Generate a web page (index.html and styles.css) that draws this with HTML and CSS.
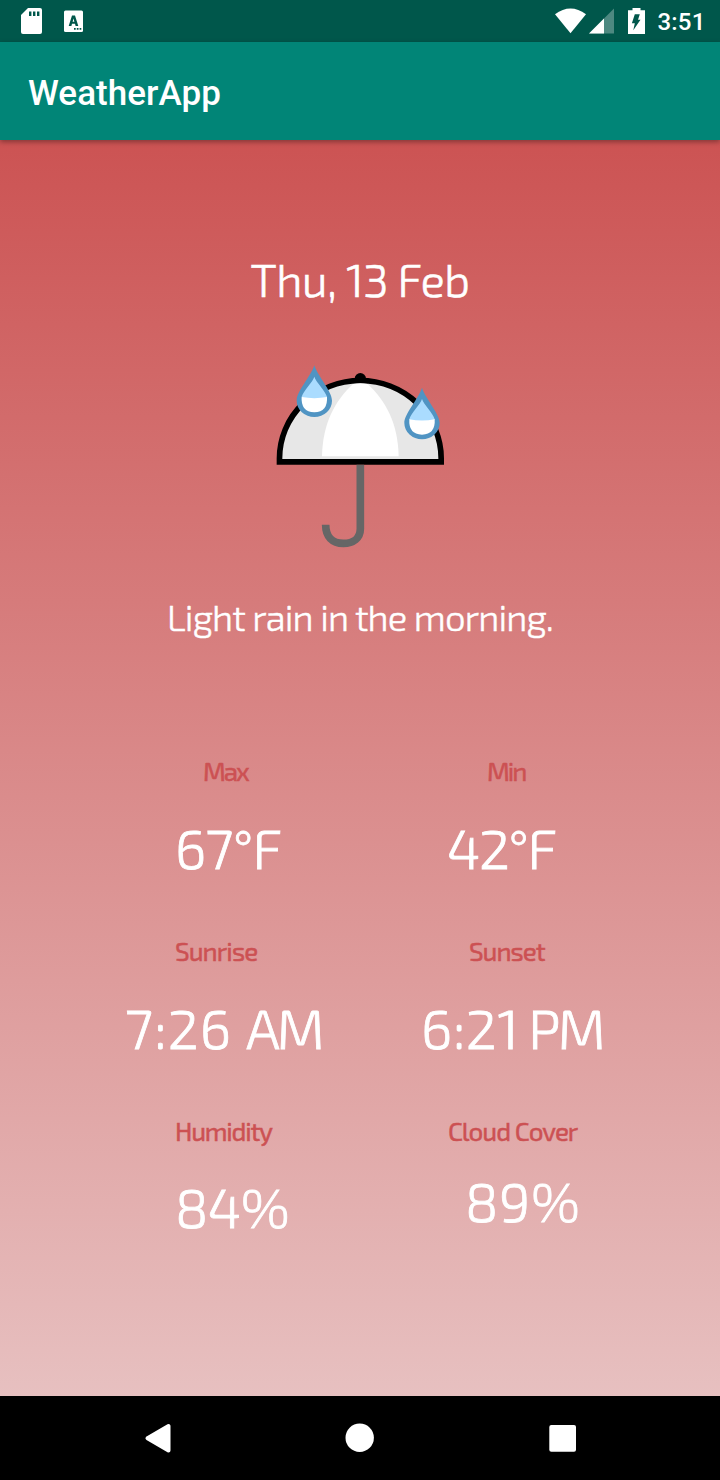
FILE: index.html
```html
<!DOCTYPE html>
<html lang="en">
<head>
<meta charset="utf-8">
<title>WeatherApp</title>
<link rel="stylesheet" href="styles.css">
</head>
<body>
<div class="screen">
  <div class="status">
    <svg class="status-left" viewBox="0 0 100 42" width="100" height="42">
      <path fill="#fff" d="M28 8h12q2 0 2 2v22q0 2-2 2H23q-2 0-2-2V15z"/>
      <path fill="#00574b" d="M29 11.500h2.400v4.500H29zM33 11.500h2.400v4.500H33zM37 11.500h2.400v4.500H37z"/>
      <rect x="64" y="10.500" width="19" height="21.500" rx="1.500" fill="#fff"/>
      <path fill="#00574b" fill-rule="evenodd" d="M72 15.500h3L78.300 26H75.600L75 23.800H72L71.400 26H68.700zM73.500 18.500 72.600 21.800H74.400z"/>
      <path fill="#00574b" d="M74 28h1.700v1.700H74zM76.800 28h1.700v1.700h-1.700zM79.600 28h1.700v1.700h-1.700z"/>
    </svg>
    <div class="status-right">
      <svg viewBox="0 0 100 42" width="100" height="42">
        <path fill="#fff" d="M5 14.300Q20.500 2.500 36 14.300L20.500 33.300z"/>
        <path fill="#4d8981" d="M64 8.500V33.500H39z"/>
        <path fill="#fff" d="M54 18.500v15H39z"/>
        <path fill="#fff" d="M82.500 8h8v2.200H95v23.700H78V10.200h4.500z"/>
        <path fill="#00574b" d="M84.800 14.300h5l-1.800 5.500h2.500l-7.200 10.400 1.500-7h-2.900z"/>
      </svg>
      <span class="clock">3:51</span>
    </div>
  </div>
  <header class="appbar"><h1 class="title">WeatherApp</h1></header>
  <main class="content">
    <div class="date">Thu, 13 Feb</div>
    <svg class="umbrella" viewBox="0 0 600 630" width="200" height="210">
      <circle cx="301" cy="86" r="17"/>
      <path fill="#e7e7e7" stroke="#000" stroke-width="17" d="M58.500 335.500V325A242.500 233 0 0 1 543.500 325V335.500z"/>
      <path fill="#fff" d="M186 319C188 220 225 152 279 102Q301 98 323 102C377 152 414 220 416 319z"/>
      <path fill="none" stroke="#666" stroke-width="23" d="M301 344V536C301 564 280 580 250 580C217 580 197 560 197 524"/>
      <g id="drop">
        <path fill="#5094c3" d="M163 46C174 80 216 124 216 152A53 49 0 0 1 110 152C110 124 152 80 163 46z"/>
        <path fill="#fff" d="M125 140H201Q204 186 163 187Q122 186 125 140z"/>
        <path fill="#aadcff" d="M163 80C168 97 197 123 201 141Q163 148 125 141C129 123 158 97 163 80z"/>
      </g>
      <use href="#drop" x="323" y="67"/>
    </svg>
    <div class="summary">Light rain in the morning.</div>
    <section class="grid">
      <div class="cell"><span class="label max">Max</span><span class="value v67">67°F</span></div>
      <div class="cell"><span class="label min">Min</span><span class="value v42">42°F</span></div>
      <div class="cell"><span class="label sunrise">Sunrise</span><span class="value rise">7:26 <span class="meridiem">AM</span></span></div>
      <div class="cell"><span class="label sunset">Sunset</span><span class="value set">6:21 <span class="meridiem">PM</span></span></div>
      <div class="cell last"><span class="label humidity">Humidity</span><span class="value v84">84%</span></div>
      <div class="cell raised"><span class="label cloud">Cloud Cover</span><span class="value v89">89%</span></div>
    </section>
  </main>
  <nav class="navbar">
    <svg viewBox="0 0 480 84" width="480" height="84">
      <path fill="#fff" stroke="#fff" stroke-width="4" stroke-linejoin="round" d="M27.500 42.300 48.500 30V54.500z"/>
      <circle cx="239.700" cy="41.700" r="14.200" fill="#fff"/>
      <rect x="429.300" y="29" width="26.700" height="26.700" rx="2" fill="#fff"/>
    </svg>
  </nav>
</div>
</body>
</html>
```
FILE: styles.css
```css
body { margin: 0; }
.screen {
  width: 720px;
  height: 1480px;
  display: flex;
  flex-direction: column;
  overflow: hidden;
  font-family: "Exo 2", Exo, Roboto, sans-serif;
  color: #fff;
  white-space: nowrap;
}
.status {
  height: 42px;
  background: #00574b;
  display: flex;
  justify-content: space-between;
}
.status-right { display: flex; width: 170px; font-family: Roboto, sans-serif; }
.clock { margin-left: 7.500px; font-size: 24px; font-weight: 500; line-height: 44px; letter-spacing: 0.2px; }
.appbar {
  height: 97.500px;
  background: #018577;
  box-shadow: 0 2px 5px rgba(0, 0, 0, 0.35);
  z-index: 1;
  display: flex;
  align-items: center;
  padding-left: 28px;
}
.title { margin: 6.500px 0 0; font: 500 35px/42px Roboto, sans-serif; letter-spacing: 0.05px; }
.content {
  flex: 1;
  background: linear-gradient(#cc5353, #e7c0c0);
  display: flex;
  flex-direction: column;
  align-items: center;
  font-weight: 300;
}
.date { margin-top: 113.500px; font-size: 45.500px; line-height: 52px; letter-spacing: -0.600px; -webkit-text-stroke: 0.6px; }
.umbrella { margin-top: 45px; }
.summary { margin-top: 34.500px; font-size: 36.500px; line-height: 44px; letter-spacing: -0.850px; -webkit-text-stroke: 0.5px; }
.grid {
  box-sizing: border-box;
  width: 720px;
  padding-left: 127px;
  margin-top: 117px;
  display: grid;
  grid-template-columns: 296px 297px;
  grid-auto-rows: 180px;
}
.cell { display: flex; flex-direction: column; align-items: flex-start; gap: 29px; }
.last { gap: 28px; }
.raised { gap: 22px; }
.label { font-size: 26px; line-height: 30px; font-weight: 400; color: #cc5153; letter-spacing: -1px; -webkit-text-stroke: 0.5px; }
.value { font-size: 55px; line-height: 64px; letter-spacing: -2px; -webkit-text-stroke: 0.8px; }
.max { margin-left: 76px; letter-spacing: -2px; }
.min { margin-left: 64px; letter-spacing: -2px; }
.sunrise { margin-left: 48px; letter-spacing: -0.9px; }
.sunset { margin-left: 46px; }
.humidity { margin-left: 48px; letter-spacing: -1.2px; }
.cloud { margin-left: 25px; }
.v67 { margin-left: 48px; letter-spacing: -0.7px; }
.v42 { margin-left: 24px; letter-spacing: -1.4px; }
.rise { margin-left: -2px; letter-spacing: 1.2px; }
.set { margin-left: -2px; letter-spacing: 0.600px; word-spacing: -4px; }
.meridiem { letter-spacing: -3px; }
.v84 { margin-left: 48px; letter-spacing: -0.6px; }
.v89 { margin-left: 42px; letter-spacing: 0.6px; }
.navbar {
  height: 84px;
  background: #000;
  display: flex;
  justify-content: center;
}
```
